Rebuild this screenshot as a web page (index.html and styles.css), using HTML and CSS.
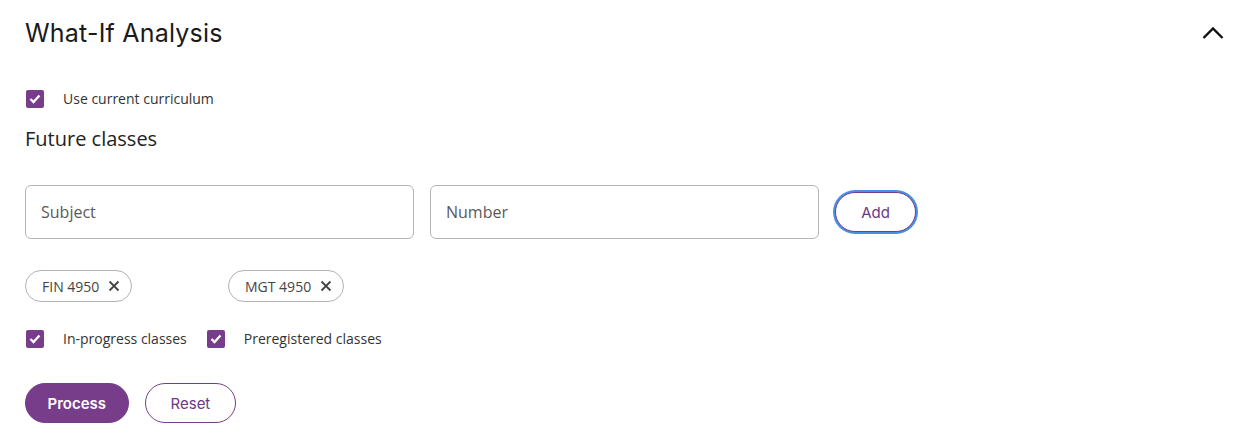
FILE: index.html
```html
<!DOCTYPE html>
<html lang="en">

<head>
    <meta charset="UTF-8">
    <meta name="viewport" content="width=device-width, initial-scale=1.0">
    <title>What-If Analysis</title>
    <link rel="stylesheet" href="styles.css">
</head>

<body>
    <div class="panel">
        <div class="panel-header">
            <h1>What-If Analysis</h1>
            <button class="collapse" aria-label="Collapse">
                <svg width="22" height="14" viewBox="0 0 22 14">
                    <polyline points="1.5,12 11,2.5 20.5,12" fill="none" stroke="#111" stroke-width="2.4" />
                </svg>
            </button>
        </div>

        <label class="check check-top">
            <span class="box"><svg width="12" height="10" viewBox="0 0 12 10"><polyline points="1.5,5 4.5,8 10.5,1.5" fill="none" stroke="#fff" stroke-width="2.3" /></svg></span>
            Use current curriculum
        </label>

        <h2>Future classes</h2>

        <div class="add-row">
            <input class="field" type="text" placeholder="Subject">
            <input class="field" type="text" placeholder="Number">
            <button class="btn btn-outline btn-add">Add</button>
        </div>

        <div class="chips">
            <span class="chip">FIN 4950
                <svg class="chip-x" width="12" height="12" viewBox="0 0 12 12"><path d="M1.5 1.5 L10.5 10.5 M10.5 1.5 L1.5 10.5" stroke="#444" stroke-width="1.8" /></svg>
            </span>
            <span class="chip">MGT 4950
                <svg class="chip-x" width="12" height="12" viewBox="0 0 12 12"><path d="M1.5 1.5 L10.5 10.5 M10.5 1.5 L1.5 10.5" stroke="#444" stroke-width="1.8" /></svg>
            </span>
        </div>

        <div class="check-row">
            <label class="check">
                <span class="box"><svg width="12" height="10" viewBox="0 0 12 10"><polyline points="1.5,5 4.5,8 10.5,1.5" fill="none" stroke="#fff" stroke-width="2.3" /></svg></span>
                In-progress classes
            </label>
            <label class="check">
                <span class="box"><svg width="12" height="10" viewBox="0 0 12 10"><polyline points="1.5,5 4.5,8 10.5,1.5" fill="none" stroke="#fff" stroke-width="2.3" /></svg></span>
                Preregistered classes
            </label>
        </div>

        <div class="actions">
            <button class="btn btn-fill">Process</button>
            <button class="btn btn-outline">Reset</button>
        </div>
    </div>
</body>

</html>
```

FILE: styles.css
```css
body {
    font-family: 'Open Sans', 'Liberation Sans', sans-serif;
    background-color: #ffffff;
    color: #333;
    margin: 0;
}

.panel {
    padding: 14px 17px 0 25px;
}

.panel-header {
    display: flex;
    justify-content: space-between;
    align-items: center;
    height: 38px;
}

h1 {
    font-family: 'Inter', 'Noto Sans', sans-serif;
    font-size: 25px;
    font-weight: 400;
    color: #1a1a1a;
    margin: 0;
    letter-spacing: 0.2px;
}

.collapse {
    background: none;
    border: 0;
    padding: 0;
    margin-top: 2px;
    cursor: pointer;
}

.check {
    display: flex;
    align-items: center;
    font-size: 14px;
    color: #333;
}

.check-top {
    margin-top: 37px;
}

.box {
    width: 18px;
    height: 18px;
    background-color: #773d8b;
    border-radius: 2px;
    margin: 0 19px 0 1px;
    display: flex;
    align-items: center;
    justify-content: center;
}

h2 {
    font-family: 'Open Sans', sans-serif;
    font-size: 20px;
    font-weight: 400;
    color: #222;
    margin: 17px 0 0;
    line-height: 28px;
}

.add-row {
    display: flex;
    align-items: center;
    gap: 16px;
    margin-top: 32px;
}

.field {
    width: 389px;
    height: 54px;
    box-sizing: border-box;
    border: 1px solid #b3b3b3;
    border-radius: 6px;
    padding: 0 15px;
    font-family: 'Open Sans', sans-serif;
    font-size: 16px;
    color: #333;
}

.field::placeholder {
    color: #5a5a5a;
}

.btn {
    font-family: 'Inter', 'Noto Sans', sans-serif;
    font-size: 15px;
    border-radius: 22px;
    height: 40px;
    box-sizing: border-box;
    cursor: pointer;
}

.btn-outline {
    background-color: #fff;
    color: #6e3882;
    border: 1px solid #773d8b;
    padding: 0 25px;
}

.btn-fill {
    background-color: #773d8b;
    color: #fff;
    border: 1px solid #773d8b;
    font-weight: 600;
    padding: 0 21.5px;
}

.btn-add {
    width: 81px;
    height: 40px;
    padding: 0;
    box-shadow: 0 0 0 2px #4a90e2;
}

.chips {
    display: grid;
    grid-template-columns: 203px 203px;
    justify-items: start;
    margin-top: 31px;
}

.chip {
    display: inline-flex;
    align-items: center;
    height: 32px;
    box-sizing: border-box;
    border: 1px solid #b3b3b3;
    border-radius: 16px;
    padding: 0 11px 0 16px;
    font-size: 14px;
    color: #444;
}

.chip-x {
    margin-left: 9px;
}

.check-row {
    display: flex;
    gap: 19px;
    margin-top: 27px;
}

.actions {
    display: flex;
    gap: 16px;
    margin-top: 35px;
}
```
